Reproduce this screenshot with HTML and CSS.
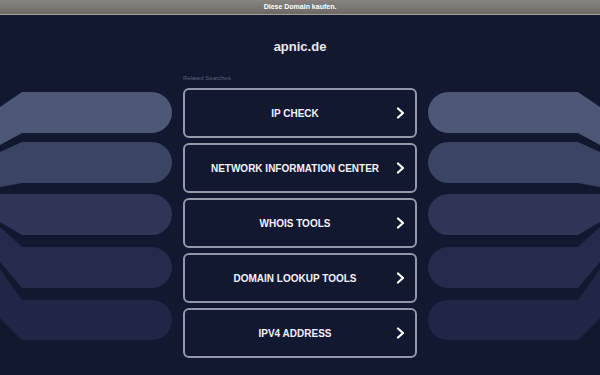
FILE: index.html
```html
<!DOCTYPE html>
<html lang="de">
<head>
    <meta charset="UTF-8">
    <meta name="viewport" content="width=device-width, initial-scale=1.0">
    <title>apnic.de</title>
    <link rel="stylesheet" href="styles.css">
</head>
<body>
    <div class="topbar">Diese Domain kaufen.</div>
    <h1 class="title">apnic.de</h1>
    <div class="row">
        <!-- Dekoration links, Koordinaten wie auf der Seite -->
        <svg class="deco" viewBox="0 74 172 301" width="172" height="301">
            <path fill="#4e5775" d="M0,107 L22,92 L151.5,92 A20.5,20.5 0 0 1 151.5,133 L22,133 L0,145 Z"/>
            <path fill="#3c4464" d="M0,152 L22,142 L151.5,142 A20.5,20.5 0 0 1 151.5,183 L22,183 L0,187 Z"/>
            <path fill="#2e3556" d="M0,194 L22,194 L151.5,194 A20.5,20.5 0 0 1 151.5,235 L22,235 L0,222 Z"/>
            <path fill="#242b4c" d="M0,227 L22,247 L151.5,247 A20.5,20.5 0 0 1 151.5,288 L22,288 L0,262 Z"/>
            <path fill="#1f2646" d="M0,269 L22,300 L152,300 A20,20 0 0 1 152,340 L22,340 L0,318 Z"/>
        </svg>
        <div class="column">
            <p class="label">Related Searches</p>
            <a class="search" href="#"><span>IP CHECK</span><svg class="chev" viewBox="0 0 9 12" width="9" height="12"><polyline points="2,1.5 7,6 2,10.5"/></svg></a>
            <a class="search" href="#"><span>NETWORK INFORMATION CENTER</span><svg class="chev" viewBox="0 0 9 12" width="9" height="12"><polyline points="2,1.5 7,6 2,10.5"/></svg></a>
            <a class="search" href="#"><span>WHOIS TOOLS</span><svg class="chev" viewBox="0 0 9 12" width="9" height="12"><polyline points="2,1.5 7,6 2,10.5"/></svg></a>
            <a class="search" href="#"><span>DOMAIN LOOKUP TOOLS</span><svg class="chev" viewBox="0 0 9 12" width="9" height="12"><polyline points="2,1.5 7,6 2,10.5"/></svg></a>
            <a class="search" href="#"><span>IPV4 ADDRESS</span><svg class="chev" viewBox="0 0 9 12" width="9" height="12"><polyline points="2,1.5 7,6 2,10.5"/></svg></a>
        </div>
        <!-- Dekoration rechts: gespiegelt -->
        <svg class="deco deco-right" viewBox="0 74 172 301" width="172" height="301">
            <path fill="#4e5775" d="M0,107 L22,92 L151.5,92 A20.5,20.5 0 0 1 151.5,133 L22,133 L0,145 Z"/>
            <path fill="#3c4464" d="M0,152 L22,142 L151.5,142 A20.5,20.5 0 0 1 151.5,183 L22,183 L0,187 Z"/>
            <path fill="#2e3556" d="M0,194 L22,194 L151.5,194 A20.5,20.5 0 0 1 151.5,235 L22,235 L0,222 Z"/>
            <path fill="#242b4c" d="M0,227 L22,247 L151.5,247 A20.5,20.5 0 0 1 151.5,288 L22,288 L0,262 Z"/>
            <path fill="#1f2646" d="M0,269 L22,300 L152,300 A20,20 0 0 1 152,340 L22,340 L0,318 Z"/>
        </svg>
    </div>
</body>
</html>
```
FILE: styles.css
```css
/* Allgemein */
body {
    margin: 0;
    padding: 0;
    height: 375px;
    overflow: hidden;
    font-family: "Liberation Sans", Arial, sans-serif;
    background-color: #131831;
    color: #fff;
}

.topbar {
    height: 14px;
    line-height: 14px;
    font-size: 7px;
    font-weight: bold;
    text-align: center;
    color: #fff;
    background: linear-gradient(#87837f, #6d6965);
    border-bottom: 1px solid #a19d99;
}

.title {
    margin: 0;
    padding-top: 24px;
    font-size: 13px;
    line-height: 16px;
    font-weight: bold;
    text-align: center;
    color: #e9eaf0;
}

/* Reihe mit Dekoration und Suchbegriffen */
.row {
    display: grid;
    grid-template-columns: 172px 234px 172px;
    column-gap: 11px;
    margin-top: 19px;
}

.deco {
    display: block;
}

.deco-right {
    transform: scaleX(-1);
}

.column {
    display: flex;
    flex-direction: column;
    gap: 5px;
}

.label {
    margin: 0 0 1px;
    font-size: 6px;
    line-height: 8px;
    color: #5b6079;
}

.search {
    display: flex;
    align-items: center;
    box-sizing: border-box;
    height: 50px;
    padding: 0 10px 0 9px;
    border: 2px solid #9497a7;
    border-radius: 6px;
    color: #f1f2f6;
    text-decoration: none;
    font-size: 10px;
    font-weight: bold;
}

.search span {
    flex: 1;
    text-align: center;
}

.chev {
    display: block;
    fill: none;
    stroke: #fff;
    stroke-width: 2.2;
    stroke-linecap: round;
    stroke-linejoin: round;
}
```
